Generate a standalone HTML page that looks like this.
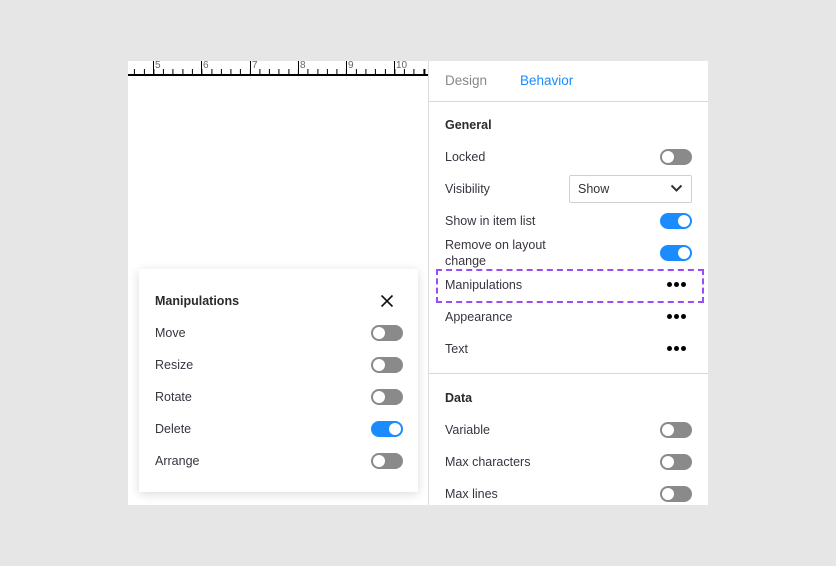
<!DOCTYPE html>
<html><head><style>
*{margin:0;padding:0;box-sizing:border-box}
body{width:836px;height:566px;background:#e6e6e6;position:relative;overflow:hidden;font-family:"Liberation Sans",sans-serif;font-size:12.5px;color:#3a3340}
.a{position:absolute}
.t{position:absolute;white-space:nowrap;line-height:16px}
.tg{position:absolute;width:32px;height:16px;border-radius:8px;background:#8a8a8a}
.tg::after{content:"";position:absolute;left:2px;top:2px;width:12px;height:12px;border-radius:50%;background:#fff}
.tg.on{background:#1a8cff}
.tg.on::after{left:18px}
.dots{position:absolute;width:20px;height:6px}
.dots i{position:absolute;top:0;width:5px;height:5px;border-radius:50%;background:#000}
.b{font-weight:bold;color:#2a2a2a}
.rl{position:absolute;top:60px;font-size:10px;color:#666}
</style></head><body>
<div class="a" style="left:128px;top:61px;width:300px;height:444px;background:#fff"></div>
<div class="a" style="left:128px;top:69px;width:300px;height:5px;background:repeating-linear-gradient(90deg,#000 0,#000 1px,transparent 1px,transparent 9.64px);background-position:-3.6px 0"></div>
<div class="a" style="left:128px;top:74px;width:300px;height:2px;background:#000"></div>
<div class="a" style="left:153px;top:61px;width:1px;height:13px;background:#000"></div>
<div class="a" style="left:201px;top:61px;width:1px;height:13px;background:#000"></div>
<div class="a" style="left:250px;top:61px;width:1px;height:13px;background:#000"></div>
<div class="a" style="left:298px;top:61px;width:1px;height:13px;background:#000"></div>
<div class="a" style="left:346px;top:61px;width:1px;height:13px;background:#000"></div>
<div class="a" style="left:394px;top:61px;width:1px;height:13px;background:#000"></div>
<div class="rl" style="left:155px">5</div><div class="rl" style="left:203px">6</div><div class="rl" style="left:252px">7</div><div class="rl" style="left:300px">8</div><div class="rl" style="left:348px">9</div><div class="rl" style="left:396px">10</div>
<div class="a" style="left:428px;top:61px;width:280px;height:444px;background:#fff;border-left:1px solid #ddd"></div>
<div class="t" style="left:445px;top:73px;font-size:13.5px;color:#888">Design</div>
<div class="t" style="left:520px;top:73px;font-size:13.5px;color:#1a8cff">Behavior</div>
<div class="a" style="left:429px;top:101px;width:279px;height:1px;background:#d8d8d8"></div>
<div class="t b" style="left:445px;top:117px">General</div>
<div class="t" style="left:445px;top:149px">Locked</div><div class="tg" style="left:660px;top:149px"></div>
<div class="t" style="left:445px;top:181px">Visibility</div>
<div class="a" style="left:569px;top:175px;width:123px;height:28px;border:1px solid #d0d0d0;border-radius:2px"></div>
<div class="t" style="left:578px;top:181px;color:#333">Show</div>
<svg class="a" style="left:670px;top:184px" width="13" height="9"><path d="M1.5 1.5L6.5 6.5L11.5 1.5" stroke="#333" stroke-width="2" fill="none"/></svg>
<div class="t" style="left:445px;top:213px">Show in item list</div><div class="tg on" style="left:660px;top:213px"></div>
<div class="t" style="left:445px;top:237px">Remove on layout<br>change</div><div class="tg on" style="left:660px;top:245px"></div>
<div class="a" style="left:436px;top:269px;width:268px;height:34px;border:2px dashed #9a4cf5"></div>
<div class="t" style="left:445px;top:277px">Manipulations</div>
<div class="dots" style="left:667px;top:282px"><i style="left:0"></i><i style="left:7px"></i><i style="left:14px"></i></div>
<div class="t" style="left:445px;top:309px">Appearance</div>
<div class="dots" style="left:667px;top:314px"><i style="left:0"></i><i style="left:7px"></i><i style="left:14px"></i></div>
<div class="t" style="left:445px;top:341px">Text</div>
<div class="dots" style="left:667px;top:346px"><i style="left:0"></i><i style="left:7px"></i><i style="left:14px"></i></div>
<div class="a" style="left:429px;top:373px;width:279px;height:1px;background:#d8d8d8"></div>
<div class="t b" style="left:445px;top:390px">Data</div>
<div class="t" style="left:445px;top:422px">Variable</div><div class="tg" style="left:660px;top:422px"></div>
<div class="t" style="left:445px;top:454px">Max characters</div><div class="tg" style="left:660px;top:454px"></div>
<div class="t" style="left:445px;top:486px">Max lines</div><div class="tg" style="left:660px;top:486px"></div>
<div class="a" style="left:139px;top:269px;width:279px;height:223px;background:#fff;border-radius:2px;box-shadow:0 2px 10px rgba(0,0,0,0.15)"></div>
<div class="t b" style="left:155px;top:293px">Manipulations</div>
<svg class="a" style="left:380px;top:294px" width="14" height="14"><path d="M1.5 1.5L12.5 12.5M12.5 1.5L1.5 12.5" stroke="#111" stroke-width="1.6"/></svg>
<div class="t" style="left:155px;top:325px">Move</div><div class="tg" style="left:371px;top:325px"></div>
<div class="t" style="left:155px;top:357px">Resize</div><div class="tg" style="left:371px;top:357px"></div>
<div class="t" style="left:155px;top:389px">Rotate</div><div class="tg" style="left:371px;top:389px"></div>
<div class="t" style="left:155px;top:421px">Delete</div><div class="tg on" style="left:371px;top:421px"></div>
<div class="t" style="left:155px;top:453px">Arrange</div><div class="tg" style="left:371px;top:453px"></div>
</body></html>
